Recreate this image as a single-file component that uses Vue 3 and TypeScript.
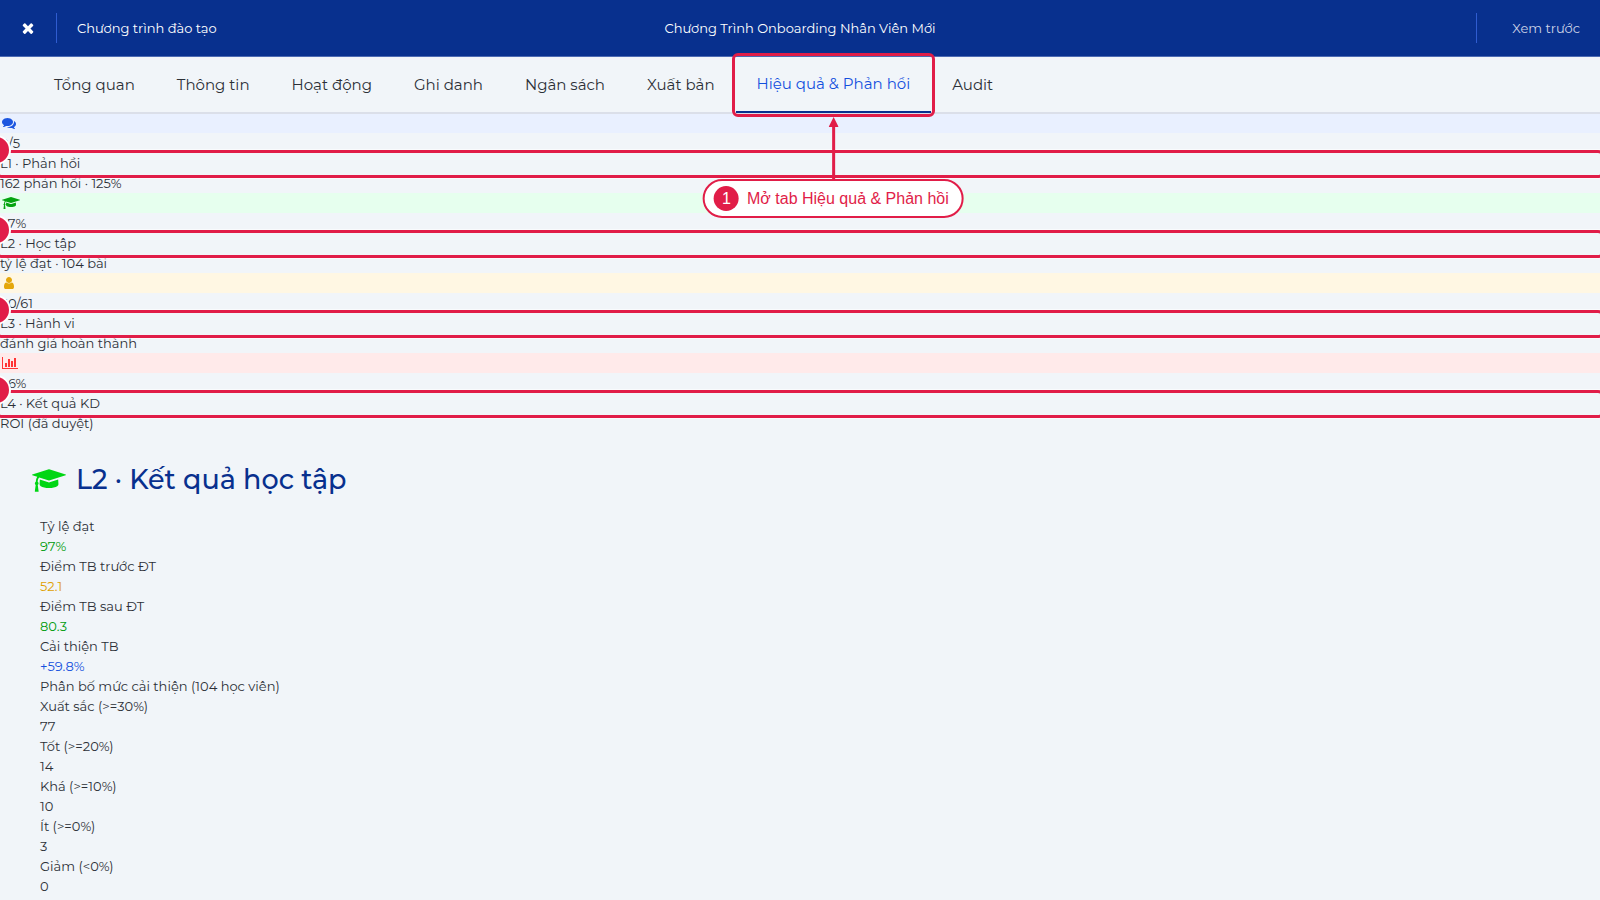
<script setup lang="ts">
interface Tab {
  label: string
  active?: boolean
}

interface Level {
  key: string
  viewBox: string
  width: number
  icon: string
  value: string
  title: string
  note: string
}

interface Metric {
  label: string
  value?: string
  tone?: string
}

const capPath =
  'M1774 836l18 316q4 69-82 128t-235 93.5-323 34.5-323-34.5-235-93.5-82-128l18-316 574 181q22 7 48 7t48-7zm530-324q0 23-22 31l-1120 352q-4 1-10 1t-10-1l-652-206q-43 34-71 111.5t-34 178.5q63 36 63 109 0 69-58 107l58 433q2 14-8 25-9 11-24 11h-192q-15 0-24-11-10-11-8-25l58-433q-58-38-58-107 0-73 65-111 11-207 98-330l-333-104q-22-8-22-31t22-31l1120-352q4-1 10-1t10 1l1120 352q22 8 22 31z'

const tabs: Tab[] = [
  { label: 'Tổng quan' },
  { label: 'Thông tin' },
  { label: 'Hoạt động' },
  { label: 'Ghi danh' },
  { label: 'Ngân sách' },
  { label: 'Xuất bản' },
  { label: 'Hiệu quả & Phản hồi', active: true },
  { label: 'Audit' },
]

const levels: Level[] = [
  {
    key: 'blue',
    viewBox: '0 0 1792 1792',
    width: 14,
    icon: 'M1408 768q0 139-94 257t-256.5 186.5-353.5 68.5q-86 0-176-16-124 88-278 128-36 9-86 16h-3q-11 0-20.5-8t-11.5-21q-1-3-1-6.5t.5-6.5 2-6l2.5-5 3.5-5.5 4-5 4.5-5 4-4.5q5-6 23-25t26-29.5 22.5-29 25-38.5 20.5-44q-124-72-195-177t-71-224q0-139 94-257t256.5-186.5 353.5-68.5 353.5 68.5 256.5 186.5 94 257zm384 256q0 120-71 224.5t-195 176.5q10 24 20.5 44t25 38.5 22.5 29 26 29.5 23 25q1 1 4 4.5t4.5 5 4 5 3.5 5.5l2.5 5 2 6 .5 6.5-1 6.5q-3 14-13 22t-22 7q-50-7-86-16-154-40-278-128-90 16-176 16-271 0-472-132 58 4 88 4 161 0 309-45t264-129q125-92 192-212t67-254q0-77-23-152 129 71 204 178t75 230z',
    value: '0/5',
    title: 'L1 · Phản hồi',
    note: '162 phản hồi · 125%',
  },
  {
    key: 'green',
    viewBox: '0 0 2304 1792',
    width: 18,
    icon: capPath,
    value: '97%',
    title: 'L2 · Học tập',
    note: 'tỷ lệ đạt · 104 bài',
  },
  {
    key: 'amber',
    viewBox: '0 0 1792 1792',
    width: 14,
    icon: 'M1536 1399q0 109-62.5 187t-150.5 78h-854q-88 0-150.5-78t-62.5-187q0-85 8.5-160.5t31.5-152 58.5-131 94-89 134.5-34.5q131 128 313 128t313-128q76 0 134.5 34.5t94 89 58.5 131 31.5 152 8.5 160.5zm-256-887q0 159-112.5 271.5t-271.5 112.5-271.5-112.5-112.5-271.5 112.5-271.5 271.5-112.5 271.5 112.5 112.5 271.5z',
    value: '60/61',
    title: 'L3 · Hành vi',
    note: 'đánh giá hoàn thành',
  },
  {
    key: 'red',
    viewBox: '0 0 2048 1792',
    width: 16,
    icon: 'M640 896v512h-256v-512h256zm384-512v1024h-256v-1024h256zm1024 1152v128h-2048v-1536h128v1408h1920zm-640-896v768h-256v-768h256zm384-384v1152h-256v-1152h256z',
    value: '96%',
    title: 'L4 · Kết quả KD',
    note: 'ROI (đã duyệt)',
  },
]

const metrics: Metric[] = [
  { label: 'Tỷ lệ đạt', value: '97%', tone: 'good' },
  { label: 'Điểm TB trước ĐT', value: '52.1', tone: 'warn' },
  { label: 'Điểm TB sau ĐT', value: '80.3', tone: 'good' },
  { label: 'Cải thiện TB', value: '+59.8%', tone: 'info' },
]

const distribution: Metric[] = [
  { label: 'Xuất sắc (>=30%)', value: '77' },
  { label: 'Tốt (>=20%)', value: '14' },
  { label: 'Khá (>=10%)', value: '10' },
  { label: 'Ít (>=0%)', value: '3' },
  { label: 'Giảm (<0%)', value: '0' },
]
</script>

<template>
  <div class="page">
    <header class="topbar">
      <div class="side">
        <button class="close" type="button" aria-label="Đóng">
          <svg width="16" height="16" viewBox="0 0 1792 1792" fill="currentColor" aria-hidden="true">
            <path d="M1490 1322q0 40-28 68l-136 136q-28 28-68 28t-68-28l-294-294-294 294q-28 28-68 28t-68-28l-136-136q-28-28-28-68t28-68l294-294-294-294q-28-28-28-68t28-68l136-136q28-28 68-28t68 28l294 294 294-294q28-28 68-28t68 28l136 136q28 28 28 68t-28 68l-294 294 294 294q28 28 28 68z" />
          </svg>
        </button>
        <span class="divider"></span>
        <a class="crumb" href="#">Chương trình đào tạo</a>
      </div>
      <div class="title">Chương Trình Onboarding Nhân Viên Mới</div>
      <div class="side end">
        <span class="divider"></span>
        <button class="preview" type="button">Xem trước</button>
      </div>
    </header>

    <nav class="tabs">
      <a v-for="tab in tabs" :key="tab.label" href="#" class="tab" :class="{ active: tab.active }">
        {{ tab.label }}
        <span v-if="tab.active" class="spot">
          <span class="guide">
            <svg class="arrow" width="10" height="62" viewBox="0 0 10 62" aria-hidden="true">
              <path d="M5 8V62" stroke="#e11d48" stroke-width="3" />
              <path d="M5 0L10 10H0Z" fill="#e11d48" />
            </svg>
            <span class="pill"><span class="num">1</span>Mở tab Hiệu quả &amp; Phản hồi</span>
          </span>
        </span>
      </a>
    </nav>

    <main>
      <section v-for="level in levels" :key="level.key" class="level">
        <div class="band" :class="level.key">
          <svg :width="level.width" height="14" :viewBox="level.viewBox" fill="currentColor" aria-hidden="true">
            <path :d="level.icon" />
          </svg>
        </div>
        <div>{{ level.value }}</div>
        <div class="marked">{{ level.title }}<span class="mark"><span class="dot"></span></span></div>
        <div>{{ level.note }}</div>
      </section>

      <section class="detail">
        <h2>
          <svg width="34" height="27" viewBox="0 0 2304 1792" fill="#00d614" aria-hidden="true">
            <path :d="capPath" />
          </svg>
          L2 · Kết quả học tập
        </h2>
        <div class="figures">
          <template v-for="m in metrics" :key="m.label">
            <div>{{ m.label }}</div>
            <div :class="m.tone">{{ m.value }}</div>
          </template>
          <div>Phân bố mức cải thiện (104 học viên)</div>
          <template v-for="d in distribution" :key="d.label">
            <div>{{ d.label }}</div>
            <div>{{ d.value }}</div>
          </template>
        </div>
      </section>
    </main>
  </div>
</template>

<style>
html,
body {
  background: #f1f5f9;
  overflow: hidden;
}
</style>

<style scoped>
.page {
  min-height: 100vh;
  background: #f1f5f9;
  color: #2c3037;
  font: 13px/20px Montserrat, Inter, sans-serif;
}

.topbar {
  display: flex;
  align-items: center;
  height: 56px;
  background: #08308e;
  border-bottom: 1px solid #4c6bb3;
  color: #fff;
}

.side {
  flex: 1;
  display: flex;
  align-items: center;
}

.end {
  justify-content: flex-end;
}

.divider {
  width: 1px;
  height: 30px;
  background: #2f5cd0;
}

.close {
  display: flex;
  padding: 20px;
  border: 0;
  background: none;
  color: inherit;
}

.crumb {
  margin-left: 20px;
  color: inherit;
  text-decoration: none;
}

.title {
  white-space: nowrap;
}

.preview {
  padding: 0 20px 0 35px;
  border: 0;
  background: none;
  color: #ccd3e6;
  font: inherit;
}

.tabs {
  position: relative;
  z-index: 1;
  display: flex;
  height: 55px;
  margin-bottom: -1px;
  padding-left: 33px;
  border-bottom: 2px solid #dbdfe9;
}

.tab {
  position: relative;
  padding: 0 21px;
  color: #2c3037;
  font-size: 15px;
  line-height: 56px;
  text-decoration: none;
  white-space: nowrap;
}

.active {
  height: 54px;
  border-bottom: 2px solid #08308e;
  color: #1350de;
  line-height: 54px;
}

.spot {
  position: absolute;
  inset: -4px -4px -6px;
  border: 3px solid #e11d48;
  border-radius: 6px;
}

.guide {
  position: absolute;
  top: 100%;
  left: 50%;
  display: flex;
  flex-direction: column;
  align-items: center;
  padding-top: 3px;
  transform: translateX(-50%);
}

.arrow {
  display: block;
}

.pill {
  display: flex;
  align-items: center;
  gap: 8px;
  height: 35px;
  padding: 0 13px 0 9px;
  border: 2px solid #e11d48;
  border-radius: 20px;
  background: #fff;
  color: #e11d48;
  font: 16px/35px "Liberation Sans", Arial, sans-serif;
}

.num {
  width: 25px;
  border-radius: 50%;
  background: #e11d48;
  color: #fff;
  line-height: 25px;
  text-align: center;
}

.band {
  height: 20px;
  padding: 3px 2px;
  box-sizing: border-box;
}

.band svg {
  display: block;
}

.blue {
  background: #e9f0ff;
  color: #1b55e0;
}

.green {
  background: #e6ffee;
  color: #04a410;
}

.amber {
  background: #fff7e3;
  color: #e4a70b;
}

.red {
  background: #ffeaea;
  color: #ff3434;
}

.marked {
  position: relative;
}

.mark {
  position: absolute;
  inset: -3px -4px -5px;
  border: 3px solid #e11d48;
  border-radius: 6px;
  box-shadow: 0 0 0 1px #ffffff99;
}

.dot {
  position: absolute;
  top: -18px;
  left: -18px;
  width: 26px;
  height: 26px;
  border: 2px solid #fff;
  border-radius: 50%;
  background: #e11d48;
}

.detail {
  padding: 27px 32px;
}

h2 {
  display: flex;
  align-items: center;
  gap: 10px;
  margin: 0;
  color: #08308e;
  font-size: 27px;
  font-weight: 500;
  line-height: 40px;
}

.figures {
  padding: 16px 8px;
}

.good {
  color: #009c0c;
}

.warn {
  color: #e0a000;
}

.info {
  color: #1350de;
}
</style>
